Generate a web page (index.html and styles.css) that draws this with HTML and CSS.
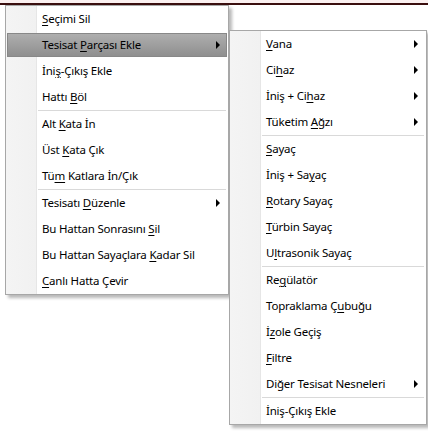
FILE: index.html
```html
<!DOCTYPE html>
<html lang="tr">
<head>
  <meta charset="UTF-8" />
  <title>Tesisat Menüsü</title>
  <link rel="stylesheet" href="styles.css">
</head>
<body>

  <div class="topbar"></div>

  <div class="menu main-menu">
    <div class="item"><span class="label"><u>S</u>eçimi Sil</span></div>
    <div class="item has-sub open">
      <span class="label">Tesisat <u>P</u>arçası Ekle</span>
      <span class="arrow"></span>

      <div class="menu submenu">
        <div class="item has-sub"><span class="label"><u>V</u>ana</span><span class="arrow"></span></div>
        <div class="item has-sub"><span class="label">Ci<u>h</u>az</span><span class="arrow"></span></div>
        <div class="item has-sub"><span class="label">İniş + Ci<u>h</u>az</span><span class="arrow"></span></div>
        <div class="item has-sub"><span class="label">Tüketim <u>A</u>ğzı</span><span class="arrow"></span></div>
        <div class="sep"></div>
        <div class="item"><span class="label"><u>S</u>ayaç</span></div>
        <div class="item"><span class="label">İniş + Sa<u>y</u>aç</span></div>
        <div class="item"><span class="label"><u>R</u>otary Sayaç</span></div>
        <div class="item"><span class="label"><u>T</u>ürbin Sayaç</span></div>
        <div class="item"><span class="label">U<u>l</u>trasonik Sayaç</span></div>
        <div class="sep"></div>
        <div class="item"><span class="label">Re<u>g</u>ülatör</span></div>
        <div class="item"><span class="label">Topraklama Ç<u>u</u>buğu</span></div>
        <div class="item"><span class="label">İ<u>z</u>ole Geçiş</span></div>
        <div class="item"><span class="label"><u>F</u>iltre</span></div>
        <div class="item has-sub"><span class="label">Diğer Tesisat Nesneleri</span><span class="arrow"></span></div>
        <div class="sep"></div>
        <div class="item"><span class="label">İniş-Çıkış Ekle</span></div>
      </div>
    </div>
    <div class="item"><span class="label">İni<u>ş</u>-Çıkış Ekle</span></div>
    <div class="item"><span class="label">Hattı <u>B</u>öl</span></div>
    <div class="sep"></div>
    <div class="item"><span class="label">Alt <u>K</u>ata İn</span></div>
    <div class="item"><span class="label">Üst <u>K</u>ata Çık</span></div>
    <div class="item"><span class="label">Tü<u>m</u> Katlara İn/Çık</span></div>
    <div class="sep"></div>
    <div class="item has-sub"><span class="label">Tesisatı <u>D</u>üzenle</span><span class="arrow"></span></div>
    <div class="item"><span class="label">Bu Hattan Sonrasını <u>S</u>il</span></div>
    <div class="item"><span class="label">Bu Hattan Sayaçlara <u>K</u>adar Sil</span></div>
    <div class="item"><span class="label"><u>C</u>anlı Hatta Çevir</span></div>
  </div>

</body>
</html>
```

FILE: styles.css
```css
* {
  box-sizing: border-box;
}

body {
  margin: 0;
  font-family: 'Noto Sans', 'Open Sans', sans-serif;
  font-size: 11.5px;
  letter-spacing: -0.2px;
  color: #000;
  background: #fff;
  height: 432px;
  position: relative;
  overflow: hidden;
}

.topbar {
  height: 5px;
  background: #fbf0f0;
  border-bottom: 2px solid #3a0e0e;
}

/* popup menus */
.menu {
  position: absolute;
  background: #fff;
  border: 1px solid #a7a7a7;
  box-shadow: 3px 3px 3px rgba(0, 0, 0, 0.28);
  display: flex;
  flex-direction: column;
}

/* icon gutter on the left of every menu */
.menu::before {
  content: "";
  position: absolute;
  top: 0;
  bottom: 0;
  left: 0;
  width: 30px;
  background: linear-gradient(to right, #f4f4f4, #f1f1f1);
  border-right: 1px solid #e6e6e6;
}

.main-menu {
  left: 5px;
  top: 5px;
  width: 224px;
}

.submenu {
  left: calc(100% + 1px);
  top: -2px;
  width: 198px;
}

.item {
  position: relative;
  height: 26px;
  display: flex;
  align-items: center;
  padding-left: 36px;
  padding-right: 8px;
  white-space: nowrap;
}

.item .label {
  position: relative;
  flex: 1;
  line-height: 16px;
}

.item u {
  text-underline-offset: 2px;
}

.item.open::after {
  content: "";
  position: absolute;
  left: 1px;
  right: 1px;
  top: 1px;
  bottom: 1px;
  background: linear-gradient(#aeaeae, #8f8f8f);
  border: 1px solid #888;
}

.item.open > .label,
.item.open > .arrow {
  z-index: 1;
}

.arrow {
  position: relative;
  width: 0;
  height: 0;
  border-top: 4px solid transparent;
  border-bottom: 4px solid transparent;
  border-left: 4px solid #000;
}

.item.open > .submenu {
  z-index: 2;
}

.sep {
  position: relative;
  height: 1px;
  margin-left: 32px;
  margin-right: 2px;
  background: #d9d9d9;
}
```
